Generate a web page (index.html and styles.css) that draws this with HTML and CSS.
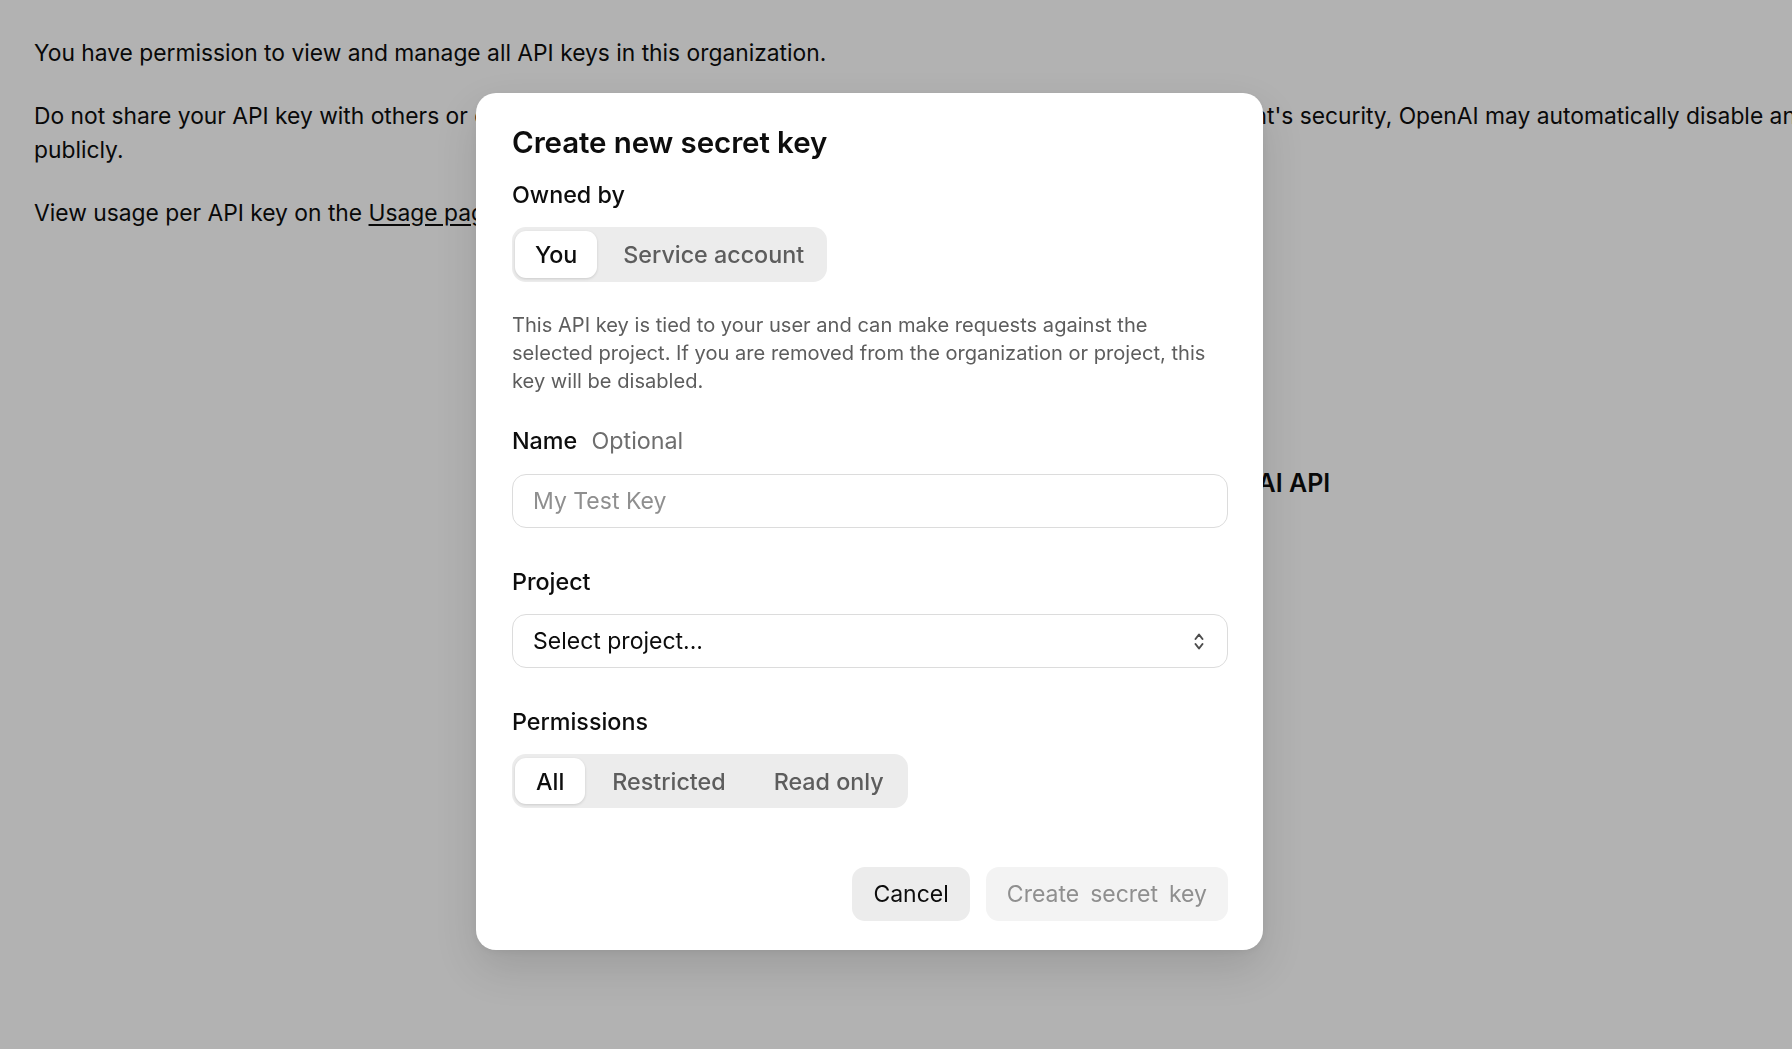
FILE: index.html
```html
<!DOCTYPE html>
<html lang="en">
<head>
<meta charset="utf-8">
<title>API keys</title>
<link rel="stylesheet" href="styles.css">
</head>
<body>
<main class="page">
  <p>You have permission to view and manage all API keys in this organization.</p>
  <p>Do not share your API key with others or expose it in the browser or other client-side code. To protect your account's security, OpenAI may automatically disable any API key that has leaked publicly.</p>
  <p>View usage per API key on the <a class="link" href="#">Usage page</a>.</p>
  <div class="empty">
    <h2 class="empty-title">Create an API key to access the OpenAI API</h2>
  </div>
</main>

<div class="backdrop"></div>

<div class="modal" role="dialog" aria-labelledby="modal-title">
  <h1 class="modal-title" id="modal-title">Create new secret key</h1>

  <div class="label label-first">Owned by</div>
  <div class="seg">
    <button class="seg-item active" type="button">You</button>
    <button class="seg-item" type="button">Service account</button>
  </div>

  <p class="desc">This API key is tied to your user and can make requests against the selected project. If you are removed from the organization or project, this key will be disabled.</p>

  <div class="label label-name">Name <span class="opt">Optional</span></div>
  <input class="input" type="text" placeholder="My Test Key">

  <div class="label label-gap">Project</div>
  <div class="select">
    <span class="select-value">Select project...</span>
    <svg class="chev" width="12" height="21" viewBox="0 0 12 21" aria-hidden="true">
      <path d="M2.5 8 L6 3.5 L9.5 8" fill="none" stroke="#4d4d4d" stroke-width="2" stroke-linecap="round" stroke-linejoin="round"/>
      <path d="M2.5 13 L6 17.5 L9.5 13" fill="none" stroke="#4d4d4d" stroke-width="2" stroke-linecap="round" stroke-linejoin="round"/>
    </svg>
  </div>

  <div class="label label-gap">Permissions</div>
  <div class="seg seg-perm">
    <button class="seg-item active" type="button">All</button>
    <button class="seg-item" type="button">Restricted</button>
    <button class="seg-item" type="button">Read only</button>
  </div>

  <div class="actions">
    <button class="btn btn-secondary" type="button">Cancel</button>
    <button class="btn btn-primary" type="button" disabled>Create secret key</button>
  </div>
</div>
</body>
</html>
```

FILE: styles.css
```css
* {
  box-sizing: border-box;
}

html,
body {
  margin: 0;
  padding: 0;
}

body {
  width: 1792px;
  height: 1049px;
  overflow: hidden;
  position: relative;
  background: #ffffff;
  color: #0d0d0d;
  font-family: Inter, "Noto Sans", "Liberation Sans", sans-serif;
}

.page {
  width: 2140px;
  padding: 36px 0 0 34px;
}

.page p {
  margin: 0 0 29px;
  font-size: 22.8px;
  line-height: 34px;
  color: #0d0d0d;
}

.link {
  color: inherit;
  text-decoration: underline;
  text-underline-offset: 3px;
}

.empty {
  margin-top: 236px;
  display: flex;
  justify-content: flex-start;
  padding-left: 772px;
}

.empty-title {
  margin: 0;
  font-size: 25px;
  line-height: 34px;
  font-weight: 600;
}

.backdrop {
  position: fixed;
  inset: 0;
  background: rgba(0, 0, 0, 0.3);
}

.modal {
  position: absolute;
  left: 476px;
  top: 93px;
  width: 787px;
  padding: 32px 35px 29px 36px;
  background: #ffffff;
  border-radius: 20px;
  box-shadow: 0 18px 44px rgba(0, 0, 0, 0.12), 0 2px 8px rgba(0, 0, 0, 0.06);
  display: flex;
  flex-direction: column;
  align-items: flex-start;
}

.modal-title {
  margin: 0;
  font-size: 29.5px;
  line-height: 35px;
  font-weight: 600;
  letter-spacing: -0.1px;
}

.label {
  font-size: 23.3px;
  line-height: 28px;
  font-weight: 500;
  color: #0d0d0d;
}

.label-first {
  margin-top: 21px;
  margin-bottom: 18px;
}

.label-name {
  margin-top: 32px;
  margin-bottom: 19px;
}

.label-gap {
  margin-top: 40px;
  margin-bottom: 18px;
}

.opt {
  margin-left: 8px;
  font-weight: 400;
  color: #6e6e6e;
}

.seg {
  display: inline-flex;
  align-items: stretch;
  gap: 6px;
  height: 55px;
  padding: 4px 3px 4px 3px;
  background: #ececec;
  border-radius: 14px;
}

.seg-perm {
  height: 54px;
}

.seg-item {
  border: none;
  background: transparent;
  padding: 0 20px;
  border-radius: 11px;
  font-family: inherit;
  font-size: 23.3px;
  font-weight: 500;
  color: #5d5d5d;
  cursor: pointer;
}

.seg-perm .seg-item {
  padding: 0 21px;
}

.seg-item.active {
  background: #ffffff;
  color: #0d0d0d;
  box-shadow: 0 1px 3px rgba(0, 0, 0, 0.14);
}

.desc {
  margin: 29px 0 0;
  max-width: 700px;
  font-size: 20.1px;
  line-height: 28px;
  color: #5d5d5d;
}

.input {
  width: 100%;
  height: 54px;
  padding: 0 20px;
  border: 1.5px solid #dcdcdc;
  border-radius: 14px;
  font-family: inherit;
  font-size: 23px;
  color: #0d0d0d;
  background: #ffffff;
  outline: none;
}

.input::placeholder {
  color: #8f8f8f;
}

.select {
  width: 100%;
  height: 54px;
  padding: 0 22px 0 20px;
  border: 1.5px solid #dcdcdc;
  border-radius: 14px;
  display: flex;
  align-items: center;
  justify-content: space-between;
  font-size: 23px;
  color: #0d0d0d;
}

.actions {
  margin-top: 59px;
  align-self: stretch;
  display: flex;
  justify-content: flex-end;
  gap: 16px;
}

.btn {
  height: 54px;
  padding: 0 21px;
  border: none;
  border-radius: 13px;
  font-family: inherit;
  font-size: 23px;
  font-weight: 400;
}

.btn-secondary {
  background: #ececec;
  color: #0d0d0d;
}

.btn-primary {
  background: #f3f3f3;
  color: #8f8f8f;
  word-spacing: 4.5px;
}
```
